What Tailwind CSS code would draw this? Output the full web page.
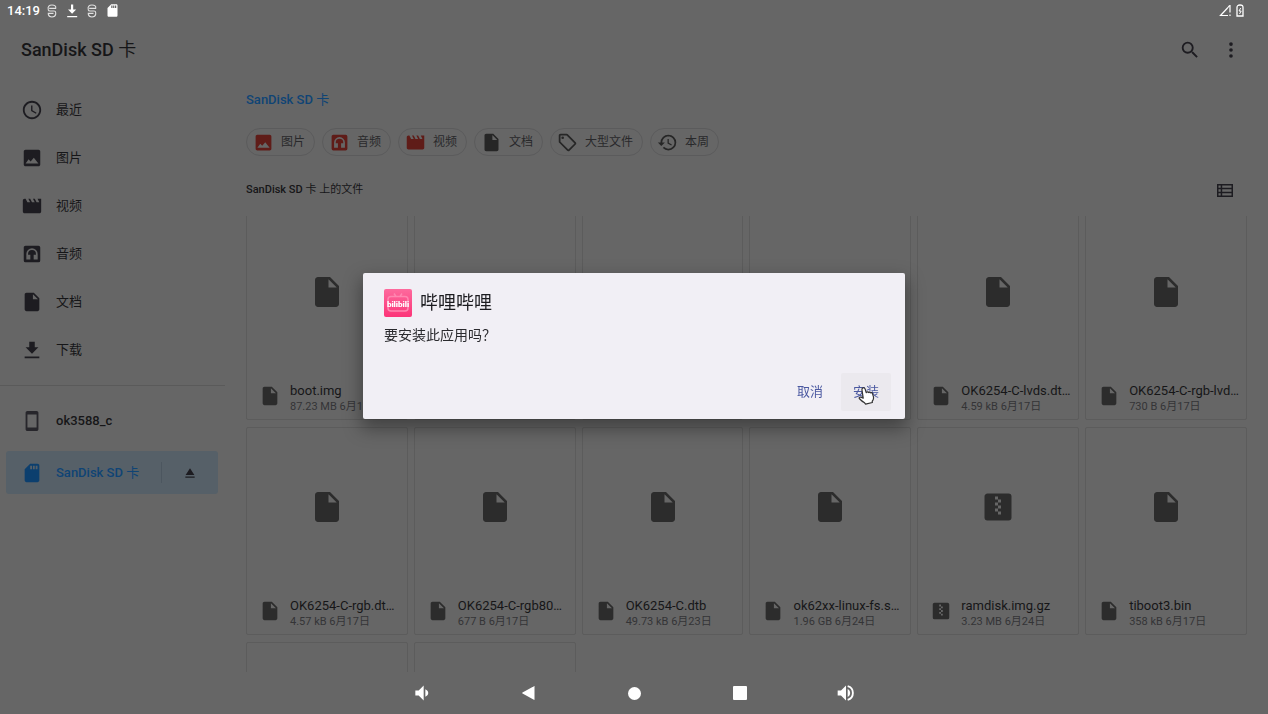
<!DOCTYPE html>
<html lang="zh-CN">
<head>
<meta charset="utf-8">
<meta name="viewport" content="width=device-width, initial-scale=1">
<title>SanDisk SD 卡</title>
<script src="https://cdn.jsdelivr.net/npm/@tailwindcss/browser@4"></script>
</head>
<body class="flex h-screen flex-col overflow-hidden bg-[#666666] font-['Roboto','Noto_Sans_CJK_SC',sans-serif] text-[13px] leading-4 text-[#161618]">

<svg class="hidden" aria-hidden="true">
  <symbol id="clock" viewBox="0 0 24 24"><path d="M11.99 2C6.47 2 2 6.48 2 12s4.47 10 9.99 10C17.52 22 22 17.52 22 12S17.52 2 11.99 2zM12 20c-4.42 0-8-3.58-8-8s3.58-8 8-8 8 3.58 8 8-3.58 8-8 8zm.5-13H11v6l5.25 3.15.75-1.23-4.5-2.67z"/></symbol>
  <symbol id="image" viewBox="0 0 24 24"><path fill-rule="evenodd" d="M21 19V5c0-1.100-.9-2-2-2H5c-1.100 0-2 .9-2 2v14c0 1.100.9 2 2 2h14c1.100 0 2-.9 2-2zM5 18l3.300-4.700 2.200 2.500L14 11.800 19 18z"/></symbol>
  <symbol id="movie" viewBox="0 0 24 24"><path d="M18 4l2 4h-3l-2-4h-2l2 4h-3l-2-4H8l2 4H7L5 4H4c-1.100 0-2 .9-2 2v12c0 1.100.9 2 2 2h16c1.100 0 2-.9 2-2V4h-4z"/></symbol>
  <symbol id="audio" viewBox="0 0 24 24"><path fill-rule="evenodd" d="M5 3h14a2 2 0 0 1 2 2v14a2 2 0 0 1-2 2H5a2 2 0 0 1-2-2V5c0-1.100.9-2 2-2zM12 5.800a6.200 6.200 0 0 0-6.200 6.200v6h4.400v-5.200H7.700V12a4.300 4.300 0 0 1 8.600 0v.8h-2.500V18h4.400v-6A6.200 6.200 0 0 0 12 5.800z"/></symbol>
  <symbol id="file" viewBox="0 0 24 24"><path fill-rule="evenodd" d="M6 2c-1.100 0-2 .9-2 2v16c0 1.100.9 2 2 2h12c1.100 0 2-.9 2-2V8l-6-6H6zm7 7V3.500L18.500 9H13z"/></symbol>
  <symbol id="archive" viewBox="0 0 24 24"><path fill-rule="evenodd" d="M5 3h14a2 2 0 0 1 2 2v14a2 2 0 0 1-2 2H5a2 2 0 0 1-2-2V5c0-1.100.9-2 2-2zM10 5h2v2h-2zM12 7h2v2h-2zM10 9h2v2h-2zM12 11h2v2h-2zM10 13h2v2h-2zM12 15h2v2h-2z"/></symbol>
  <symbol id="download" viewBox="0 0 24 24"><path d="M19 9h-4V3H9v6H5l7 7 7-7zM4 19v2h16v-2H4z"/></symbol>
  <symbol id="phone" viewBox="0 0 24 24"><path fill-rule="evenodd" d="M17 1H7c-1.100 0-2 .9-2 2v18c0 1.100.9 2 2 2h10c1.100 0 2-.9 2-2V3c0-1.100-.9-2-2-2zm0 18H7V5h10v14z"/></symbol>
  <symbol id="sd" viewBox="0 0 24 24"><path fill-rule="evenodd" d="M18 2h-8L4 8v12c0 1.100.9 2 2 2h12c1.100 0 2-.9 2-2V4c0-1.100-.9-2-2-2zm-6 6h-2V4h2v4zm3 0h-2V4h2v4zm3 0h-2V4h2v4z"/></symbol>
  <symbol id="eject" viewBox="0 0 24 24"><path d="M4 18h16v2H4zM12 4L4.500 15.500h15z"/></symbol>
  <symbol id="tag" viewBox="0 0 24 24"><path d="M21.410 11.580l-9-9C12.050 2.220 11.550 2 11 2H4c-1.100 0-2 .9-2 2v7c0 .55.22 1.050.59 1.420l9 9c.36.36.86.58 1.410.58s1.050-.22 1.410-.59l7-7c.37-.36.59-.86.59-1.410s-.23-1.060-.59-1.420zM13 20.010L4 11V4h7l9 9-7 7.010z"/><circle cx="6.500" cy="6.500" r="1.500"/></symbol>
  <symbol id="history" viewBox="0 0 24 24"><path d="M13 3a9 9 0 0 0-9 9H1l3.890 3.890.07.14L9 12H6c0-3.870 3.130-7 7-7s7 3.130 7 7-3.130 7-7 7c-1.930 0-3.680-.79-4.940-2.060l-1.420 1.420A8.950 8.950 0 0 0 13 21a9 9 0 0 0 0-18zm-1 5v5l4.280 2.540.72-1.210-3.500-2.080V8H12z"/></symbol>
  <symbol id="search" viewBox="0 0 24 24"><path d="M15.500 14h-.79l-.28-.27A6.470 6.470 0 0 0 16 9.500 6.500 6.500 0 1 0 9.500 16c1.610 0 3.090-.59 4.230-1.570l.27.28v.79l5 4.990L20.490 19l-4.990-5zm-6 0C7.010 14 5 11.990 5 9.500S7.010 5 9.500 5 14 7.010 14 9.500 11.990 14 9.500 14z"/></symbol>
  <symbol id="more" viewBox="0 0 24 24"><circle cx="12" cy="5.500" r="2"/><circle cx="12" cy="12" r="2"/><circle cx="12" cy="18.500" r="2"/></symbol>
  <symbol id="list" viewBox="0 0 16 13"><path fill-rule="evenodd" d="M0 0h16v13H0zM1.500 1.500v2.300h2.200V1.500zM5.200 1.500v2.300h9.300V1.500zM1.500 5.300v2.400h2.200V5.300zM5.200 5.300v2.400h9.300V5.300zM1.500 9.200v2.300h2.200V9.200zM5.200 9.200v2.300h9.300V9.200z"/></symbol>
  <symbol id="usage" viewBox="0 0 10 14"><path d="M1.300 5.800C.4 2.500 2.300 1 5 1s4.300 1.300 3.700 3.400H2.200M1.300 5.800Q1.500 7 3 7h4q1.700 0 1.700 1.800v1.400Q8.300 13 5 13t-3.700-2.800V9.400h5.200" fill="none" stroke="#e0e0e0" stroke-width="1.100"/></symbol>
</svg>

<!-- status bar -->
<header class="flex h-[21px] shrink-0 items-center justify-between pr-6 pl-[7px] text-white">
  <div class="flex items-center">
    <time class="w-[40px] font-medium">14:19</time>
    <svg class="h-[14px] w-[10px]"><use href="#usage"/></svg>
    <svg class="mx-[8px] h-[14px] w-[14px]" viewBox="0 0 14 14" fill="currentColor"><path d="M6 .5h2.200v5h3L7.100 9.800 3 5.500h3zM2.200 12h10v1.300h-10z"/></svg>
    <svg class="h-[14px] w-[10px]"><use href="#usage"/></svg>
    <svg class="ml-[8px] h-[15px] w-[15px]" fill="currentColor"><use href="#sd"/></svg>
  </div>
  <div class="flex items-center gap-1">
    <svg class="h-[13px] w-[13px]" viewBox="0 0 13 13" fill="none" stroke="currentColor" stroke-width="1.200"><path d="M8.500 4L1.500 11.500h7.500M11 1v7.500M11 10.500v1.500M8.500 4l2-2.500"/></svg>
    <svg class="h-[13px] w-[8px]" viewBox="0 0 8 13" fill="none" stroke="currentColor" stroke-width="1.300"><path d="M1 3.500Q1 1 4 1t3 2.500V12H1z"/><path d="M4.700 4L3 7h2.200L3.500 10" stroke-width="1"/></svg>
  </div>
</header>

<!-- toolbar -->
<div class="flex h-[58px] shrink-0 items-center justify-between pr-[26px] pl-[21px]">
  <h1 class="text-[18px] leading-6 font-medium">SanDisk SD <span class="font-normal">卡</span></h1>
  <div class="flex gap-[19px]">
    <button type="button" aria-label="搜索"><svg class="h-[22px] w-[22px]" fill="#1d1c21"><use href="#search"/></svg></button>
    <button type="button" aria-label="更多选项"><svg class="h-[22px] w-[22px]" fill="#1d1c21"><use href="#more"/></svg></button>
  </div>
</div>

<div class="flex min-h-0 flex-1">
  <!-- navigation drawer -->
  <nav class="w-[225px] shrink-0 pt-[7px]">
    <a href="#" class="flex h-12 items-center gap-[13px] pl-[21px]"><svg class="h-[22px] w-[22px]" fill="#1d1c21"><use href="#clock"/></svg>最近</a>
    <a href="#" class="flex h-12 items-center gap-[13px] pl-[21px]"><svg class="h-[22px] w-[22px]" fill="#1d1c21"><use href="#image"/></svg>图片</a>
    <a href="#" class="flex h-12 items-center gap-[13px] pl-[21px]"><svg class="h-[22px] w-[22px]" fill="#1d1c21"><use href="#movie"/></svg>视频</a>
    <a href="#" class="flex h-12 items-center gap-[13px] pl-[21px]"><svg class="h-[22px] w-[22px]" fill="#1d1c21"><use href="#audio"/></svg>音频</a>
    <a href="#" class="flex h-12 items-center gap-[13px] pl-[21px]"><svg class="h-[22px] w-[22px]" fill="#1d1c21"><use href="#file"/></svg>文档</a>
    <a href="#" class="flex h-12 items-center gap-[13px] pl-[21px]"><svg class="h-[22px] w-[22px]" fill="#1d1c21"><use href="#download"/></svg>下载</a>
    <hr class="my-[11px] border-[#5a5a5a]">
    <a href="#" class="flex h-12 items-center gap-[13px] pl-[21px] font-medium"><svg class="h-[22px] w-[22px]" fill="#27262b"><use href="#phone"/></svg>ok3588_c</a>
    <div class="mt-[6px] mr-[7px] ml-[6px] flex h-[43px] items-center rounded-[3px] bg-[#566068] pl-[15px]">
      <a href="#" class="flex flex-1 items-center gap-[13px] font-medium text-[#0f4475]"><svg class="h-[22px] w-[22px]" fill="#0c3f6e"><use href="#sd"/></svg><span>SanDisk SD <span class="font-normal">卡</span></span></a>
      <button type="button" aria-label="弹出" class="flex h-[21px] w-[57px] items-center justify-center border-l border-[#4c565f]"><svg class="h-[14px] w-[14px]" fill="#1d1c21"><use href="#eject"/></svg></button>
    </div>
  </nav>

  <!-- directory -->
  <main class="flex min-w-0 flex-1 flex-col px-[21px]">
    <a href="#" class="flex h-[41px] shrink-0 items-center font-medium text-[#0f4475]"><span>SanDisk SD <span class="font-normal">卡</span></span></a>
    <div class="mt-[8px] flex shrink-0 gap-[7px] text-[12px] text-[#29292b]">
      <button type="button" class="flex h-[28px] items-center gap-[7px] rounded-full border border-[#5b5b5c] pr-[9px] pl-[6px]"><svg class="h-[21px] w-[21px]" fill="#5f1c18"><use href="#image"/></svg>图片</button>
      <button type="button" class="flex h-[28px] items-center gap-[7px] rounded-full border border-[#5b5b5c] pr-[9px] pl-[6px]"><svg class="h-[21px] w-[21px]" fill="#5f1c18"><use href="#audio"/></svg>音频</button>
      <button type="button" class="flex h-[28px] items-center gap-[7px] rounded-full border border-[#5b5b5c] pr-[9px] pl-[6px]"><svg class="h-[21px] w-[21px]" fill="#5f1c18"><use href="#movie"/></svg>视频</button>
      <button type="button" class="flex h-[28px] items-center gap-[7px] rounded-full border border-[#5b5b5c] pr-[9px] pl-[6px]"><svg class="h-[21px] w-[21px]" fill="#262626"><use href="#file"/></svg>文档</button>
      <button type="button" class="flex h-[28px] items-center gap-[7px] rounded-full border border-[#5b5b5c] pr-[9px] pl-[6px]"><svg class="h-[21px] w-[21px]" fill="#262626"><use href="#tag"/></svg>大型文件</button>
      <button type="button" class="flex h-[28px] items-center gap-[7px] rounded-full border border-[#5b5b5c] pr-[9px] pl-[6px]"><svg class="h-[21px] w-[21px]" fill="#262626"><use href="#history"/></svg>本周</button>
    </div>
    <div class="mt-[8px] flex h-[52px] shrink-0 items-center justify-between pr-[14px]">
      <h2 class="text-[11px] font-medium">SanDisk SD <span class="font-normal">卡 上的文件</span></h2>
      <button type="button" aria-label="列表视图"><svg class="h-[13px] w-[16px]" fill="#1d1c21"><use href="#list"/></svg></button>
    </div>
    <div class="min-h-0 flex-1 overflow-hidden">
      <div id="files" class="-mt-1 grid grid-cols-6 gap-x-[6px] gap-y-[7px]"></div>
    </div>
  </main>
</div>

<!-- system navigation -->
<footer class="flex h-[42px] shrink-0 justify-center text-white">
  <button type="button" aria-label="音量减" class="flex w-[106px] items-center justify-center"><svg class="h-[20px] w-[20px]" viewBox="0 0 24 24" fill="currentColor"><path d="M4 9v6h4l6 6V3L8 9H4zm12-1.500v9c2-.8 3.500-2.500 3.500-4.500S18 8.300 16 7.500z"/></svg></button>
  <button type="button" aria-label="返回" class="flex w-[106px] items-center justify-center"><svg class="h-[16px] w-[14px]" viewBox="0 0 14 16" fill="currentColor"><path d="M13.500 1.500v13q0 .6-.6.3L1.500 8.500q-.7-.5 0-1L12.900 1.200q.6-.3.6.3z"/></svg></button>
  <button type="button" aria-label="主屏幕" class="flex w-[106px] items-center justify-center"><span class="size-[13px] rounded-full bg-white"></span></button>
  <button type="button" aria-label="最近任务" class="flex w-[106px] items-center justify-center"><span class="size-[14px] rounded-[1px] bg-white"></span></button>
  <button type="button" aria-label="音量加" class="flex w-[106px] items-center justify-center"><svg class="h-[20px] w-[20px]" viewBox="0 0 24 24" fill="currentColor"><path d="M2 9v6h4l6 6V3L6 9H2zm12-1.800v9.600c1.800-.8 3-2.700 3-4.800s-1.200-4-3-4.800z"/><path d="M14 3.800a8.500 8.500 0 0 1 0 16.400" fill="none" stroke="currentColor" stroke-width="2.200"/></svg></button>
</footer>

<!-- install dialog -->
<div class="fixed inset-x-0 top-[20px] bottom-[43px] flex items-center justify-center">
  <section role="dialog" aria-modal="true" aria-labelledby="app-name" class="w-[542px] max-w-full rounded-[2px] bg-[#f1eff5] px-[14px] pt-[16px] pb-[8px] shadow-[0_8px_18px_2px_rgba(0,0,0,0.35)]">
    <div class="flex items-center gap-2 px-[7px]">
      <svg class="size-[28px]" viewBox="0 0 28 28" aria-hidden="true">
        <defs><linearGradient id="pink" x1="0" y1="0" x2="0" y2="1"><stop offset="0" stop-color="#fd6a9d"/><stop offset="1" stop-color="#fc3478"/></linearGradient></defs>
        <rect width="28" height="28" rx="2" fill="url(#pink)"/>
        <path d="M10 4.500l2 3h4l2-3M7 7.500h14q3 0 3 3v8.500q0 3-3 3H7q-3 0-3-3v-8.500q0-3 3-3z" fill="none" stroke="#ff86b0" stroke-width="1.500"/>
        <text x="14" y="18" text-anchor="middle" font-family="Roboto" font-size="8" font-weight="900" fill="#fff">bilibili</text>
      </svg>
      <h3 id="app-name" class="text-[18px] leading-7 text-[#1b1b1f]">哔哩哔哩</h3>
    </div>
    <p class="mt-[8px] px-[7px] text-[14px] leading-5 text-[#2a2a2e]">要安装此应用吗？</p>
    <div class="mt-[28px] flex justify-end gap-[6px] text-[#4a58a0]">
      <button type="button" class="h-[38px] w-[50px] rounded-[2px]">取消</button>
      <button type="button" class="relative h-[38px] w-[50px] rounded-[2px] bg-[#ebe9ee]">安装
        <svg class="absolute top-[13px] left-[17px] h-[19px] w-[17px]" viewBox="0 0 17 19" aria-hidden="true"><path d="M4.500 2.200q1.500-1.200 2.500.5l1.200 4 .2-.5q1.300-.9 2 .3.900-.9 2 .3 1.400-.7 2 .6l1 3.300q.6 3-1.200 4.500l.2 1.300-6.800 1.700-1-1.400Q4 15.500 1.300 12.500q-.4-1.500 1.300-1.500l2.600 1.200L4 4.200Q3.800 3 4.500 2.200z" fill="#fff" stroke="#333" stroke-width="1.200" stroke-linejoin="round"/></svg>
      </button>
    </div>
  </section>
</div>

<script>
const files = [
  ['boot.img', '87.23 MB 6月17日', 'file'], null, null, null,
  ['OK6254-C-lvds.dt…', '4.59 kB 6月17日', 'file'],
  ['OK6254-C-rgb-lvd…', '730 B 6月17日', 'file'],
  ['OK6254-C-rgb.dt…', '4.57 kB 6月17日', 'file'],
  ['OK6254-C-rgb80…', '677 B 6月17日', 'file'],
  ['OK6254-C.dtb', '49.73 kB 6月23日', 'file'],
  ['ok62xx-linux-fs.s…', '1.96 GB 6月24日', 'file'],
  ['ramdisk.img.gz', '3.23 MB 6月24日', 'archive'],
  ['tiboot3.bin', '358 kB 6月17日', 'file'],
  null, null
];
document.getElementById('files').innerHTML = files.map(f => `
  <article class="flex h-[208px] min-w-0 flex-col rounded-[2px] border border-[#5c5c5c]">${f ? `
    <div class="flex h-[158px] shrink-0 items-center justify-center"><svg class="size-[36px]" fill="#2c2c2c"><use href="#${f[2]}"/></svg></div>
    <div class="flex items-start gap-[9px] pt-[12px] pl-[12px]">
      <svg class="mt-[2px] size-[22px] shrink-0" fill="#2c2c2c"><use href="#${f[2]}"/></svg>
      <div class="whitespace-nowrap">
        <p>${f[0]}</p>
        <p class="text-[11px] text-[#343436]">${f[1]}</p>
      </div>
    </div>` : ''}
  </article>`).join('');
</script>
</body>
</html>
